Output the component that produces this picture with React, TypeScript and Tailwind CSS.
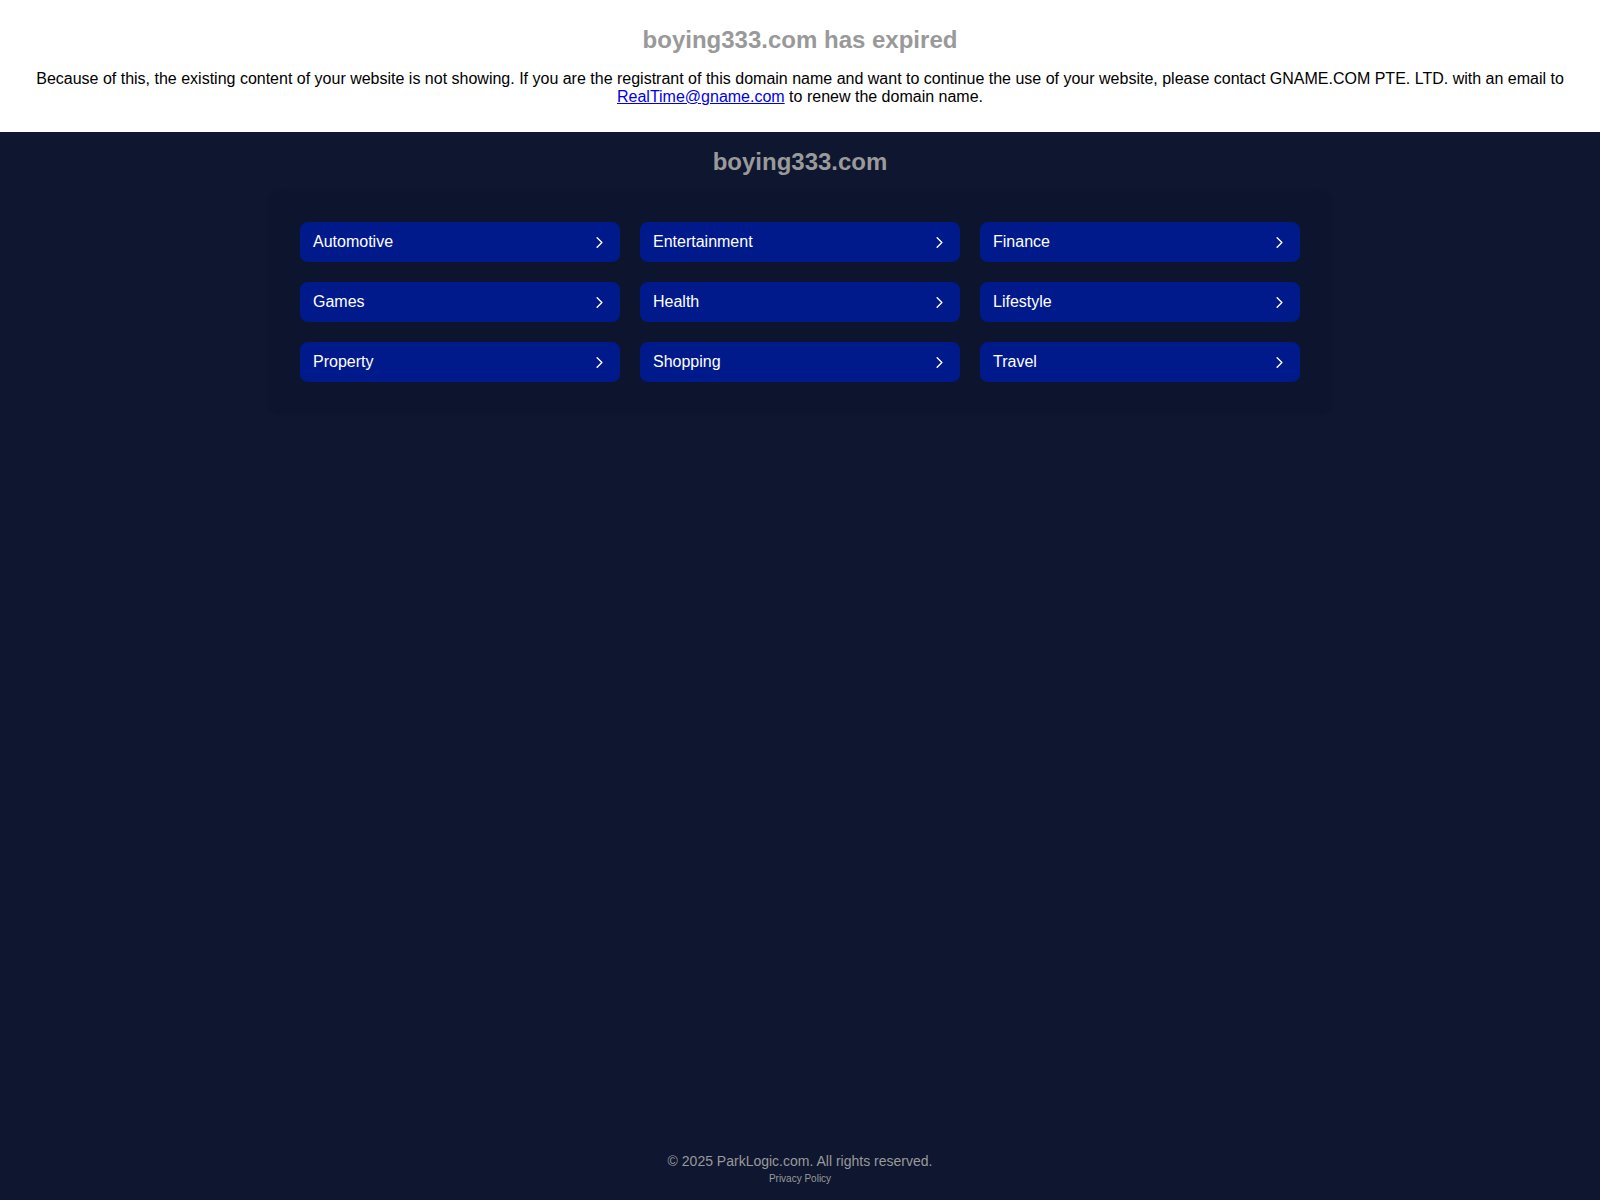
import React from 'react';
import { ChevronRight } from 'lucide-react';

const CATEGORIES = [
  'Automotive',
  'Entertainment',
  'Finance',
  'Games',
  'Health',
  'Lifestyle',
  'Property',
  'Shopping',
  'Travel',
];

export default function App() {
  return (
    <div className="min-h-screen flex flex-col bg-[#0e1630] font-['Liberation_Sans',Arial,sans-serif]">
      {/* expired notice */}
      <div className="bg-white px-[10px] py-[26px] text-center">
        <h1 className="text-[24px] leading-[28px] font-bold text-[#999999]">boying333.com has expired</h1>
        <p className="mt-[16px] text-[16px] leading-[18px] text-black">
          Because of this, the existing content of your website is not showing. If you are the registrant of this domain name and want to continue the use of your website, please contact GNAME.COM PTE. LTD. with an email to{' '}
          <a href="#" className="text-[#0000ee] underline">RealTime@gname.com</a> to renew the domain name.
        </p>
      </div>

      {/* parked page */}
      <div className="flex-1 flex flex-col items-center pt-[16px]">
        <h2 className="text-[24px] leading-[28px] font-bold text-[#9a9a9a]">boying333.com</h2>

        <div className="mt-[16px] w-[1060px] p-[30px] rounded-[10px] bg-[#0d152e] shadow-[0_0_5px_rgba(0,0,0,0.12)]">
          <div className="grid grid-cols-3 gap-[20px]">
            {CATEGORIES.map((cat) => (
              <a
                key={cat}
                href="#"
                className="h-[40px] flex items-center justify-between pl-[13px] pr-[11px] rounded-[8px] bg-[#011a8b] text-white text-[16px]"
              >
                <span>{cat}</span>
                <ChevronRight size={19} strokeWidth={1.75} />
              </a>
            ))}
          </div>
        </div>

        <div className="flex-1" />

        <footer className="pb-[15px] text-center text-[#9a9a9a]">
          <div className="text-[14px] leading-[18px]">© 2025 ParkLogic.com. All rights reserved.</div>
          <a href="#" className="block text-[10px] leading-[12px] mt-[3px] text-[#9a9a9a]">Privacy Policy</a>
        </footer>
      </div>
    </div>
  );
}
